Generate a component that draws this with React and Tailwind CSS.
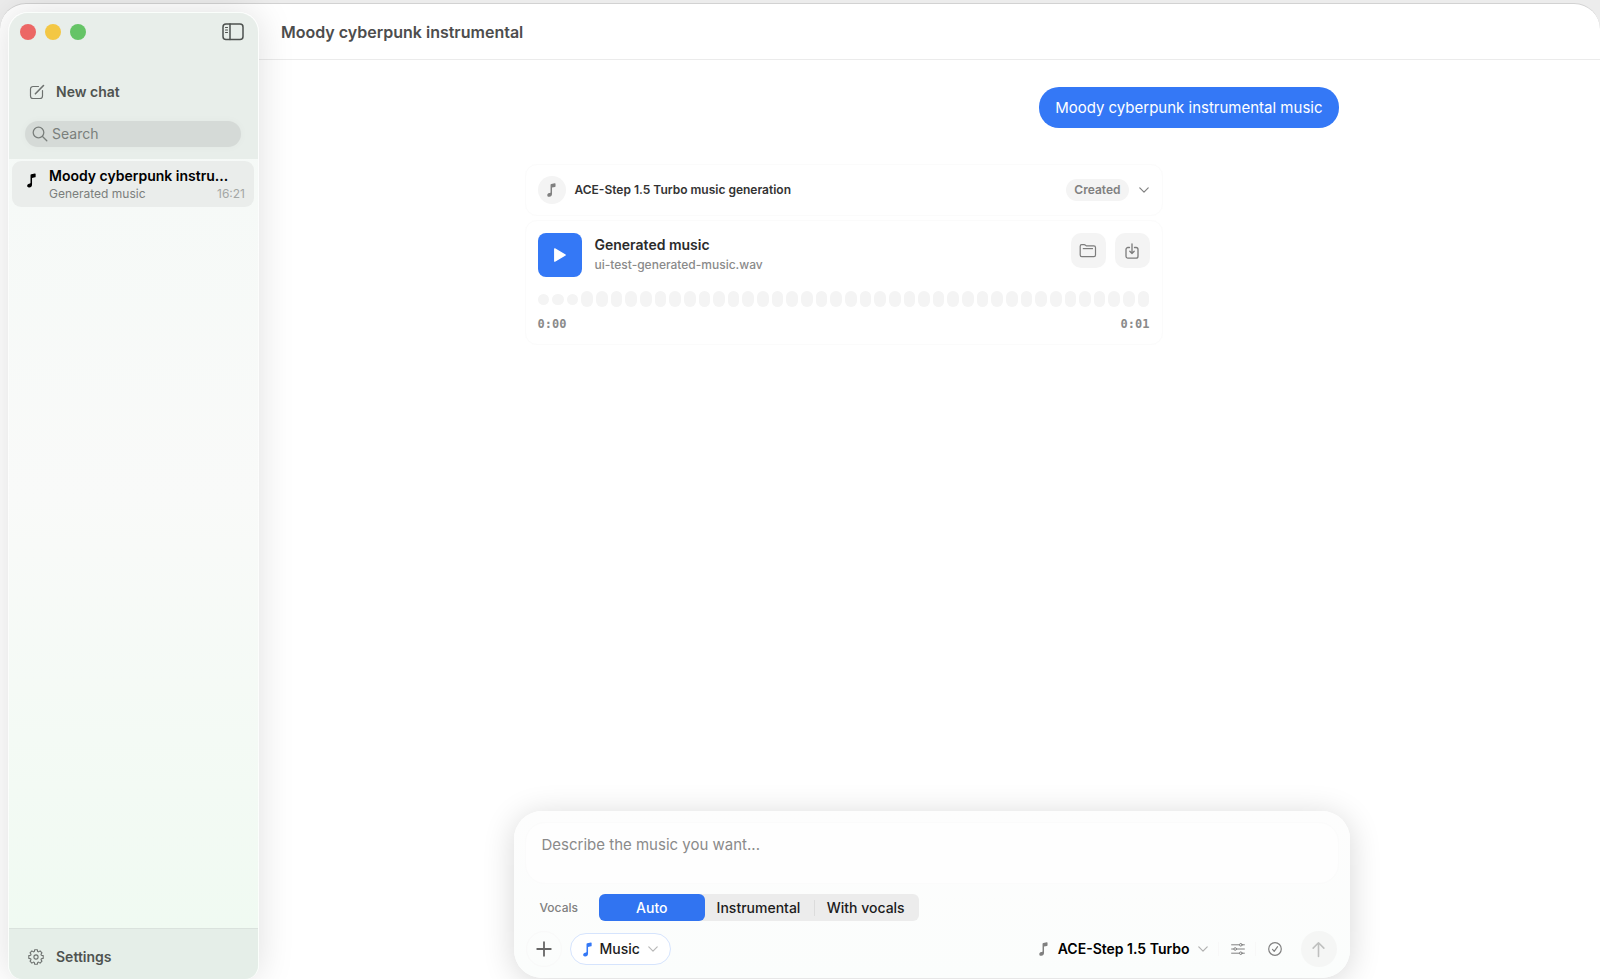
import { useState } from "react";

const VOCALS = ["Auto", "Instrumental", "With vocals"];
const BARS = Array.from({ length: 42 }, (_, i) => (i < 3 ? 11 : 16));

function NoteIcon({ className }) {
  return (
    <svg viewBox="0 0 10 16" className={className} fill="currentColor" aria-hidden="true">
      <path d="M3.9 2.3c0-.7.3-1.1.9-1.2L8.8.3c.4-.1.8.2.8.6v2.8c0 .4-.3.7-.7.8l-3.3.7v7.4c0 1.8-1.2 2.9-3 3.1C1.1 15.900.2 15.100.2 13.900c0-1.300.9-2.100 2.200-2.400l.8-.2c.5-.1.7-.3.7-.8z" />
    </svg>
  );
}

function Chevron({ className }) {
  return (
    <svg viewBox="0 0 10 6" className={className} fill="none" stroke="currentColor" strokeWidth="1.2" strokeLinecap="round" strokeLinejoin="round" aria-hidden="true">
      <path d="M.8.9 5 5.100 9.200.9" />
    </svg>
  );
}

function Sidebar() {
  return (
    <aside className="z-10 mt-2 ml-2 flex w-[251px] shrink-0 flex-col overflow-hidden rounded-t-[20px] rounded-b-[14px] border border-b-0 border-white/70 bg-linear-to-b from-[#f4f9f6] via-[#f9faf9] to-[#effaf1] shadow-[0_0_36px_rgba(0,0,0,0.13)]">
      <div className="bg-[#e8eeea] pr-[17px] pb-3 pl-4">
        <div className="flex h-[38px] items-center gap-[9px]">
          <button aria-label="Close" className="-ml-[5px] size-4 rounded-full bg-[#ec6765]" />
          <button aria-label="Minimize" className="size-4 rounded-full bg-[#f3c744]" />
          <button aria-label="Zoom" className="size-4 rounded-full bg-[#65c466]" />
          <button aria-label="Toggle sidebar" className="-mr-[3px] ml-auto text-[#4d514f]">
            <svg viewBox="0 0 22 18" className="h-[18px] w-[22px]" fill="none" stroke="currentColor" strokeWidth="1.5" strokeLinecap="round">
              <rect x="1" y="1" width="20" height="15.5" rx="3" />
              <path d="M8 1v15.5" />
              <path d="M3.500 4.500h2M3.500 7h2M3.500 9.500h2" strokeWidth="1.1" />
            </svg>
          </button>
        </div>
        <button className="mt-[25px] flex h-8 items-center gap-[11px] pl-1 text-sm font-semibold text-[#4f5350]">
          <svg viewBox="0 0 16 16" className="size-4 text-[#6d716f]" fill="none" stroke="currentColor" strokeWidth="1.2" strokeLinecap="round" strokeLinejoin="round">
            <path d="M9.500 2.500H4A2.500 2.500 0 0 0 1.500 5v7A2.500 2.500 0 0 0 4 14.500h7a2.500 2.500 0 0 0 2.500-2.500V6.500" />
            <path d="M6.400 9.800 14.500 1.500" strokeWidth="1.6" />
          </svg>
          New chat
        </button>
        <label className="mt-[13px] flex h-[26px] items-center gap-1 rounded-full bg-[#d5dad7] px-[7px] text-[#7a7f7c] shadow-[0_0_8px_rgba(0,0,0,0.03)]">
          <svg viewBox="0 0 16 16" className="size-4 shrink-0" fill="none" stroke="currentColor" strokeWidth="1.3" strokeLinecap="round">
            <circle cx="6.5" cy="6.5" r="5.3" />
            <path d="m10.500 10.500 4.300 4.300" />
          </svg>
          <input type="search" aria-label="Search" placeholder="Search" className="w-full min-w-0 bg-transparent text-sm outline-none placeholder:text-[#7a7f7c]" />
        </label>
      </div>

      <nav className="flex-1 pt-[2px] pr-1 pl-[3px]">
        <a href="#chat" className="flex h-[46px] gap-[13px] rounded-[9px] bg-[#eaedeb] pr-[9px] pl-2">
          <NoteIcon className="mt-3 ml-[7px] h-[15px] w-[9px] shrink-0 text-black" />
          <div className="min-w-0 flex-1 pt-[5px]">
            <p className="text-sm leading-5 font-semibold whitespace-nowrap text-black">Moody cyberpunk instru...</p>
            <p className="flex justify-between text-xs leading-4 text-[#7b7e7c]">
              Generated music <time className="text-[#a4a7a5]">16:21</time>
            </p>
          </div>
        </a>
      </nav>

      <div className="h-[51px] border-t border-[#dae2dd] bg-[#e5eee8] px-4">
        <button className="flex h-14 items-center gap-3 pl-[3px] text-sm font-semibold text-[#4f5350]">
          <svg viewBox="0 0 16 16" className="size-4 text-[#6d716f]" fill="none" stroke="currentColor" strokeWidth="1.1" strokeLinejoin="round">
            <path d="M6.700.7h2.600l.4 1.900.8.3 1.600-1 1.900 1.900-1 1.600.3.8 1.900.4v2.800l-1.900.4-.3.8 1 1.600-1.900 1.900-1.600-1-.8.3-.4 1.900H6.700l-.4-1.900-.8-.3-1.600 1L2 12.200l1-1.600-.3-.8-1.900-.4V6.600l1.900-.4.3-.8-1-1.600 1.900-1.900 1.600 1 .8-.3z" />
            <circle cx="8" cy="8" r="2.1" />
          </svg>
          Settings
        </button>
      </div>
    </aside>
  );
}

function MusicResult() {
  return (
    <div className="flex w-full max-w-[638px] flex-col gap-1">
      <section className="flex h-[52px] items-center rounded-xl border border-[#fbfbfb] px-3">
        <span className="flex size-7 items-center justify-center rounded-full bg-[#f4f4f4] text-[#808080]">
          <NoteIcon className="h-[14px] w-[9px]" />
        </span>
        <h2 className="ml-[9px] text-xs font-semibold text-[#333]">ACE-Step 1.5 Turbo music generation</h2>
        <span className="ml-auto rounded-full bg-[#f4f4f4] px-2 text-xs leading-[22px] font-semibold text-[#808080]">Created</span>
        <button aria-label="Show details" className="mr-[1px] ml-[10px] text-[#808080]">
          <Chevron className="h-[6px] w-[10px]" />
        </button>
      </section>

      <section className="rounded-xl border border-[#fbfbfb] p-3">
        <div className="flex items-start">
          <button aria-label="Play" className="flex size-11 items-center justify-center rounded-lg bg-[#3478f6] text-white">
            <svg viewBox="0 0 16 18" className="h-4 w-[14px]" fill="currentColor" stroke="currentColor" strokeWidth="1.5" strokeLinejoin="round">
              <path d="M2 2v14l12-7z" />
            </svg>
          </button>
          <div className="ml-[13px]">
            <h3 className="text-sm leading-6 font-semibold text-[#2b2b2b]">Generated music</h3>
            <p className="text-xs leading-4 font-medium text-[#8a8a8a]">ui-test-generated-music.wav</p>
          </div>
          <div className="ml-auto flex gap-[9px] text-[#7c7c7c]">
            <button aria-label="Show in folder" className="flex size-[35px] items-center justify-center rounded-[10px] bg-[#f4f4f4]">
              <svg viewBox="0 0 18 16" className="h-4 w-[18px]" fill="none" stroke="currentColor" strokeWidth="1.2" strokeLinejoin="round">
                <path d="M1.200 12V3.200c0-1 .6-1.500 1.500-1.500h2.500c.6 0 .9.200 1.300.5l.8.700h7.500c1.100 0 1.700.6 1.700 1.600V12c0 1-.6 1.600-1.600 1.600H2.800c-1 0-1.600-.6-1.600-1.600z" />
                <path d="M3.800 5.600h10.200" />
              </svg>
            </button>
            <button aria-label="Save" className="flex size-[35px] items-center justify-center rounded-[10px] bg-[#f4f4f4]">
              <svg viewBox="0 0 16 18" className="h-[18px] w-4" fill="none" stroke="currentColor" strokeWidth="1.3" strokeLinecap="round" strokeLinejoin="round">
                <path d="M5.500 5.500H4A2 2 0 0 0 2 7.500v6.700a2 2 0 0 0 2 2h8a2 2 0 0 0 2-2V7.500a2 2 0 0 0-2-2h-1.500" />
                <path d="M8 1.800v9.700M5.800 9.300 8 11.500l2.200-2.200" />
              </svg>
            </button>
          </div>
        </div>
        <div className="mt-[14px] flex h-4 items-center gap-[3px]">
          {BARS.map((h, i) => (
            <span key={i} className="flex-1 rounded-full bg-[#f4f4f4]" style={{ height: h }} />
          ))}
        </div>
        <div className="mt-[9px] flex justify-between font-['DejaVu_Sans_Mono',monospace] text-xs leading-4 font-bold text-[#8a8a8a]">
          <span>0:00</span>
          <span>0:01</span>
        </div>
      </section>
    </div>
  );
}

function Composer() {
  const [vocals, setVocals] = useState("Auto");

  return (
    <form className="mx-auto mb-[1px] w-full max-w-[836px] rounded-[28px] bg-linear-to-b from-[#fdfdfd] to-[#fbfdfc] p-[11px] shadow-[0_4px_32px_rgba(0,0,0,0.16)]">
      <textarea
        aria-label="Prompt"
        placeholder="Describe the music you want..."
        className="block h-[62px] w-full resize-none rounded-[20px] border border-[#fbfbfb] bg-[#fefefe] px-4 py-[10px] text-[15px] leading-6 outline-none placeholder:text-[#8a8a8a]"
      />
      <div role="radiogroup" aria-labelledby="vocals-label" className="mt-[10px] flex items-center pl-[15px]">
        <span id="vocals-label" className="w-[59px] text-xs font-medium text-[#808080]">Vocals</span>
        <div className="flex h-[27px] w-80 rounded-md bg-[#ececec]">
          {VOCALS.map((v) => (
            <label
              key={v}
              className={
                "flex flex-1 items-center justify-center text-sm font-medium " +
                (v === vocals ? "rounded-md bg-[#3174f1] text-white" : "text-[#1c1c1c]")
              }
            >
              <input type="radio" name="vocals" className="sr-only" checked={v === vocals} onChange={() => setVocals(v)} />
              {v === "With vocals" && <span className="-ml-3 mr-3 h-4 w-px bg-[#dcdcdc]" />}
              {v}
            </label>
          ))}
        </div>
      </div>
      <div className="mt-[10px] flex h-9 items-center">
        <button type="button" aria-label="Add" className="ml-[1px] flex size-9 items-center justify-center rounded-full border border-[#f9f9f9] text-[#666]">
          <svg viewBox="0 0 16 16" className="size-4" stroke="currentColor" strokeWidth="1.8" strokeLinecap="round">
            <path d="M8 1.200v13.600M1.200 8h13.600" />
          </svg>
        </button>
        <button type="button" className="ml-2 flex h-8 items-center rounded-full border border-[#d6e4fd] bg-white px-3 text-sm font-medium text-[#1c1c1c]">
          <NoteIcon className="h-[15px] w-[9px] text-[#3478f6]" />
          <span className="ml-2">Music</span>
          <Chevron className="ml-2 h-[6px] w-[10px] text-[#b8b8b8]" />
        </button>
        <div className="ml-auto flex h-[34px] items-center rounded-full px-4 text-[#808080]">
          <button type="button" className="flex items-center text-sm font-semibold text-black">
            <NoteIcon className="h-[14px] w-[9px] text-[#808080]" />
            <span className="ml-[10px]">ACE-Step 1.5 Turbo</span>
            <Chevron className="ml-2 h-[6px] w-[10px] text-[#b0b0b0]" />
          </button>
          <button type="button" aria-label="Options" className="ml-[10px] border-l border-[#f8f8f8] pl-3">
            <svg viewBox="0 0 14 14" className="size-[14px]" fill="none" stroke="currentColor" strokeWidth="1" strokeLinecap="round">
              <path d="M.6 2.800h7.600M11.400 2.800h2M.6 7h2M5.800 7h7.600M.6 11.200h7.600M11.400 11.200h2" />
              <circle cx="9.8" cy="2.8" r="1.3" />
              <circle cx="4.2" cy="7" r="1.3" />
              <circle cx="9.8" cy="11.2" r="1.3" />
            </svg>
          </button>
          <button type="button" aria-label="Model ready" className="ml-[10px] border-l border-[#f8f8f8] pl-3">
            <svg viewBox="0 0 14 14" className="size-[14px]" fill="none" stroke="currentColor" strokeWidth="1.2" strokeLinecap="round" strokeLinejoin="round">
              <circle cx="7" cy="7" r="6.3" />
              <path d="m4.500 7.400 1.700 2L9.600 4.700" />
            </svg>
          </button>
        </div>
        <button type="submit" aria-label="Send" className="mr-[2px] ml-[3px] flex size-9 items-center justify-center rounded-full bg-[#f5f6f5] text-[#bfc0bf]">
          <svg viewBox="0 0 16 18" className="h-[17px] w-[15px]" fill="none" stroke="currentColor" strokeWidth="1.7" strokeLinecap="round" strokeLinejoin="round">
            <path d="M8 16.500V1.800M2.300 7.500 8 1.800l5.700 5.700" />
          </svg>
        </button>
      </div>
    </form>
  );
}

export default function App() {
  return (
    <div className="h-screen overflow-hidden bg-[#ececec] pt-[3px] font-['Inter',sans-serif]">
      <div className="flex h-full rounded-t-[26px] border-t border-[#d2d2d2] bg-white">
        <Sidebar />
        <div className="flex min-w-0 flex-1 flex-col">
          <header className="flex h-14 items-center border-b border-[#ebebeb] pl-[22px]">
            <h1 className="text-base font-semibold text-[#4d4d4d]">Moody cyberpunk instrumental</h1>
          </header>
          <main className="flex flex-1 flex-col pl-1">
            <div className="mx-auto flex w-full max-w-[814px] flex-1 flex-col pt-[27px]">
              <p className="self-end rounded-[20px] bg-[#3478f6] px-4 py-2 text-[15px] leading-[25px] text-white">
                Moody cyberpunk instrumental music
              </p>
              <div className="mt-9">
                <MusicResult />
              </div>
            </div>
            <Composer />
          </main>
        </div>
      </div>
    </div>
  );
}
